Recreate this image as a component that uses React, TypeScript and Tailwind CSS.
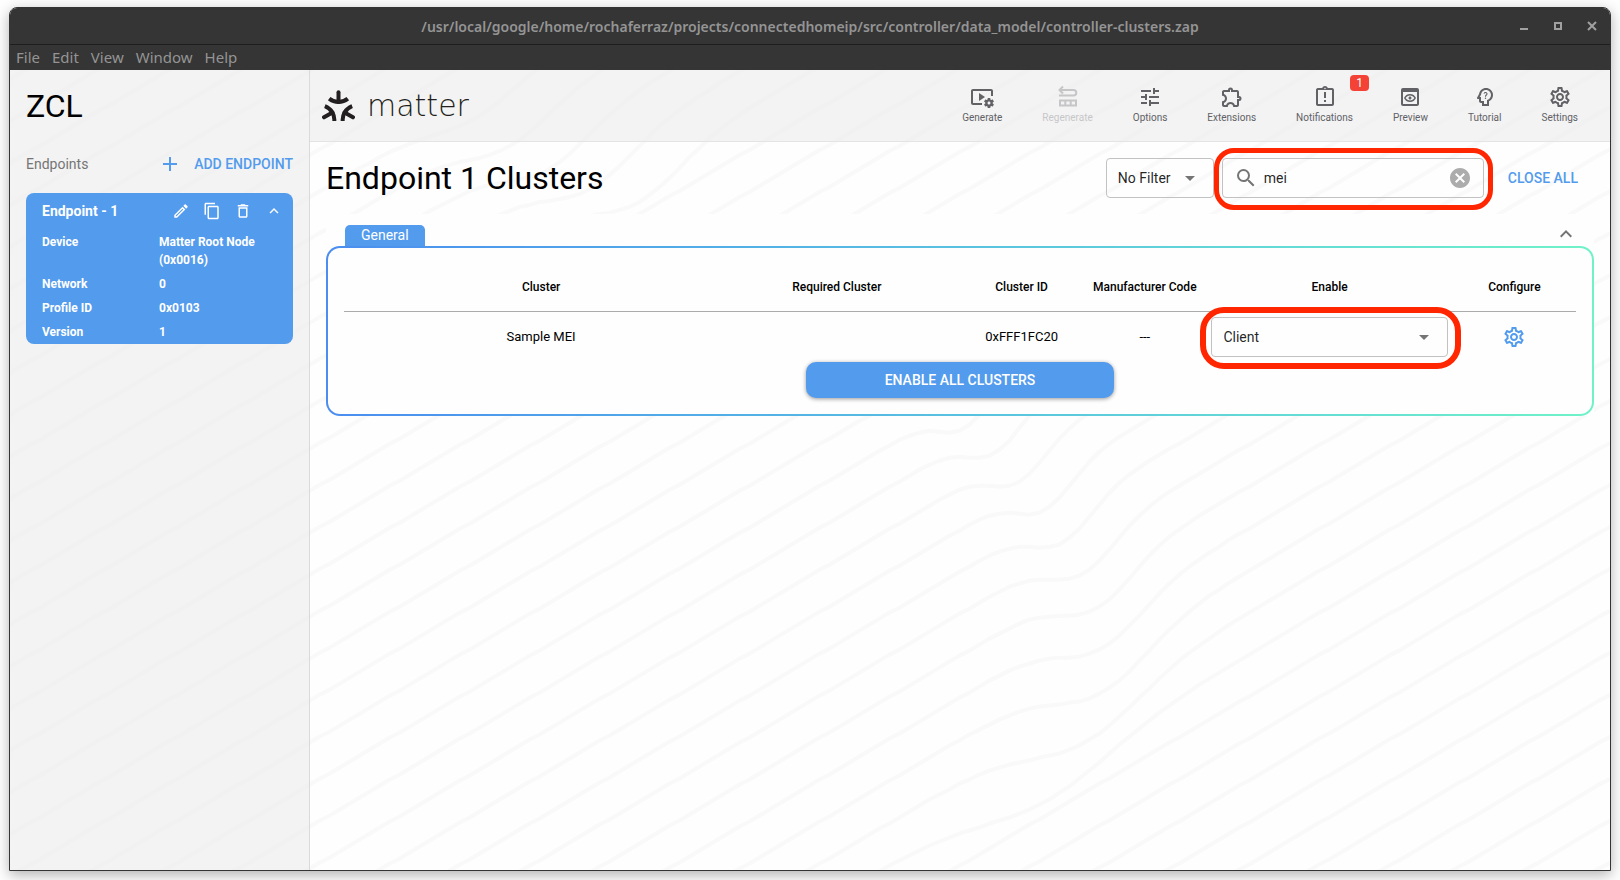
import React from "react";
import {
  MdAdd,
  MdArrowDropDown,
  MdCancel,
  MdContentCopy,
  MdDeleteOutline,
  MdKeyboardArrowUp,
  MdOutlineAssignmentLate,
  MdOutlineEdit,
  MdOutlineExtension,
  MdOutlinePreview,
  MdOutlinePsychologyAlt,
  MdOutlineSettings,
  MdSearch,
  MdTune,
  MdVideoSettings,
} from "react-icons/md";

interface ToolbarItem {
  label: string;
  icon: React.ReactNode;
  disabled?: boolean;
  badge?: number;
}

const RegenerateIcon = () => (
  <svg viewBox="0 0 24 24" className="h-6 w-6" fill="none" stroke="currentColor" strokeWidth="2">
    <path d="M7 1.500 3.500 5 7 8.500M4 5h13.500a2.700 2.700 0 0 1 0 5.500H3" />
    <path d="M4 15.500h16v5H4zM9.300 15.500v5M14.700 15.500v5" />
  </svg>
);

const toolbar: ToolbarItem[] = [
  { label: "Generate", icon: <MdVideoSettings className="h-6 w-6" /> },
  { label: "Regenerate", icon: <RegenerateIcon />, disabled: true },
  { label: "Options", icon: <MdTune className="h-6 w-6" /> },
  { label: "Extensions", icon: <MdOutlineExtension className="h-6 w-6" /> },
  { label: "Notifications", icon: <MdOutlineAssignmentLate className="h-6 w-6" />, badge: 1 },
  { label: "Preview", icon: <MdOutlinePreview className="h-6 w-6" /> },
  { label: "Tutorial", icon: <MdOutlinePsychologyAlt className="h-6 w-6" /> },
  { label: "Settings", icon: <MdOutlineSettings className="h-6 w-6" /> },
];

const details = [
  { name: "Device", value: "Matter Root Node (0x0016)" },
  { name: "Network", value: "0" },
  { name: "Profile ID", value: "0x0103" },
  { name: "Version", value: "1" },
];

// Centre, width and depth of the dent in each contour line, by line number
const dents: Record<number, [number, number, number]> = {
  9: [475, 40, 18],
  10: [510, 40, 24],
  11: [550, 40, 28],
  12: [592, 42, 30],
  13: [640, 42, 30],
  22: [935, 24, 26],
  23: [965, 24, 27],
  24: [995, 25, 28],
  25: [1020, 26, 29],
  26: [1046, 27, 30],
  27: [1064, 29, 31],
  28: [1084, 32, 32],
  29: [1098, 35, 33],
  30: [1104, 40, 34],
  31: [1104, 46, 36],
  32: [1088, 54, 34],
  33: [1050, 62, 28],
};

const contour = (n: number) => {
  const points: string[] = [];
  for (let x = 0; x <= 1640; x += 10) {
    const [centre, width, depth] = dents[n] ?? [0, 1, 0];
    const dent = depth * Math.exp(-((x - centre) ** 2) / (2 * width ** 2));
    points.push(`${x},${Math.round(42 * n + 1 - 0.586 * x + dent)}`);
  }
  return points.join(" ");
};

const Waves = () => (
  <svg
    aria-hidden="true"
    viewBox="10 70 1601 801"
    preserveAspectRatio="xMinYMin slice"
    className="pointer-events-none absolute inset-0 h-full w-full"
    fill="none"
    stroke="#f9f9f9"
    strokeWidth="4"
    strokeLinejoin="round"
  >
    {Array.from({ length: 44 }, (_, i) => (
      <polyline key={i} points={contour(i + 1)} />
    ))}
  </svg>
);

const MatterLogo = () => (
  <div className="flex items-center gap-3 text-[#231f20]">
    <svg
      aria-hidden="true"
      viewBox="0 0 33 31"
      className="h-[31px] w-[33px]"
      fill="none"
      stroke="currentColor"
      strokeWidth="4"
    >
      <g id="arm">
        <path d="M16.500 2.300V12" strokeLinecap="round" />
        <path d="M7.200 8.600c5.500 4.500 13.100 4.500 18.600 0" />
      </g>
      <use href="#arm" transform="rotate(120 16.500 19)" />
      <use href="#arm" transform="rotate(240 16.500 19)" />
    </svg>
    <span className="font-['DejaVu_Sans',sans-serif] text-[30px] leading-8 font-extralight">
      matter
    </span>
  </div>
);

const TitleBar = () => (
  <div className="bg-[#353535] font-['Noto_Sans',sans-serif] text-[15px] text-[#949494]">
    <div className="relative flex h-[37px] items-center justify-center border-b border-[#1e1e1e]">
      <p className="pt-px text-sm font-semibold">
        /usr/local/google/home/rochaferraz/projects/connectedhomeip/src/controller/data_model/controller-clusters.zap
      </p>
      <div className="absolute right-3 flex gap-[22px]">
        <button aria-label="Minimize" className="flex h-3 w-3 items-end p-[2px]">
          <span className="h-[2px] w-2 bg-[#a0a0a0]" />
        </button>
        <button aria-label="Maximize" className="flex h-3 w-3 p-[2px]">
          <span className="h-2 w-2 border-2 border-[#a0a0a0]" />
        </button>
        <button aria-label="Close" className="h-3 w-3">
          <svg viewBox="0 0 12 12" className="h-3 w-3" stroke="#a0a0a0" strokeWidth="2">
            <path d="m2 2 8 8M10 2l-8 8" />
          </svg>
        </button>
      </div>
    </div>
    <nav className="flex h-[25px] items-center gap-3 px-[6px]">
      <button>File</button>
      <button>Edit</button>
      <button>View</button>
      <button>Window</button>
      <button>Help</button>
    </nav>
  </div>
);

const Sidebar = () => (
  <aside className="relative w-[300px] shrink-0 border-r border-[#dadada] bg-[#ebebeb]/60 px-4">
    <h1 className="pt-4 text-[32px] leading-10">ZCL</h1>
    <div className="flex items-center justify-between pt-[26px] text-sm">
      <span className="text-[#757575]">Endpoints</span>
      <button className="flex items-center gap-3 font-medium text-[#539bed]">
        <MdAdd className="h-6 w-6" />
        ADD ENDPOINT
      </button>
    </div>
    <section className="mt-[17px] rounded-lg bg-[#539bed] text-white">
      <div className="flex h-9 items-center justify-between pr-[10px] pl-4">
        <h2 className="text-sm font-bold">Endpoint - 1</h2>
        <div className="flex items-center gap-[13px]">
          <button aria-label="Edit endpoint">
            <MdOutlineEdit className="h-[18px] w-[18px]" />
          </button>
          <button aria-label="Copy endpoint">
            <MdContentCopy className="h-[18px] w-[18px]" />
          </button>
          <button aria-label="Delete endpoint">
            <MdDeleteOutline className="h-[18px] w-[18px]" />
          </button>
          <button aria-label="Collapse endpoint">
            <MdKeyboardArrowUp className="h-[18px] w-[18px]" />
          </button>
        </div>
      </div>
      <dl className="pt-px text-xs leading-[18px] font-bold">
        {details.map(({ name, value }) => (
          <div key={name} className="flex px-4 py-[3px]">
            <dt className="w-[117px] shrink-0">{name}</dt>
            <dd>{value}</dd>
          </div>
        ))}
      </dl>
    </section>
  </aside>
);

const Header = () => (
  <header className="flex h-[72px] items-center justify-between border-b border-[#e4e4e4] bg-[#ebebeb]/60 px-3">
    <MatterLogo />
    <div className="flex">
      {toolbar.map(({ label, icon, disabled, badge }) => (
        <button
          key={label}
          disabled={disabled}
          className="relative flex flex-col items-center px-5 text-[10px] leading-[18px] text-[#616166] disabled:opacity-30"
        >
          {icon}
          <span>{label}</span>
          {badge && (
            <span className="absolute -top-[10px] right-1 rounded bg-[#f44336] px-[6px] text-xs leading-4 text-white">
              {badge}
            </span>
          )}
        </button>
      ))}
    </div>
  </header>
);

const Toolbar = () => (
  <div className="flex items-center justify-between">
    <h2 className="text-[32px] leading-10">Endpoint 1 Clusters</h2>
    <div className="flex items-center text-sm">
      <div className="relative">
        <select
          aria-label="Filter"
          className="h-10 w-[108px] appearance-none rounded border border-[#c2c2c2] pl-[11px] text-black/87"
        >
          <option>No Filter</option>
        </select>
        <MdArrowDropDown className="pointer-events-none absolute top-2 right-3 h-6 w-6 text-[#757575]" />
      </div>
      <div className="relative ml-2 flex h-10 w-[262px] items-center rounded border border-[#c2c2c2] px-[11px]">
        <MdSearch className="h-6 w-6 text-[#757575]" />
        <input
          type="text"
          aria-label="Search clusters"
          defaultValue="mei"
          className="ml-[6px] min-w-0 flex-1 bg-transparent text-black/87 outline-none"
        />
        <button aria-label="Clear search">
          <MdCancel className="h-6 w-6 text-[#acacac]" />
        </button>
        <div className="pointer-events-none absolute -top-[11px] -right-[10px] -bottom-[13px] -left-[9px] rounded-[20px] border-[5px] border-[#ff2600]" />
      </div>
      <button className="pr-4 pl-6 font-medium text-[#539bed]">CLOSE ALL</button>
    </div>
  </div>
);

const ClusterTable = () => (
  <section className="mt-4 bg-[#fefefe]">
    <div className="flex items-end justify-between pt-2 pr-4 pl-[19px]">
      <h3 className="rounded-t-[5px] bg-[#539bed] px-4 text-sm leading-[21px] text-white">
        General
      </h3>
      <button aria-label="Collapse General">
        <MdKeyboardArrowUp className="h-6 w-6 text-[#757575]" />
      </button>
    </div>
    <div className="rounded-[14px] bg-gradient-to-r from-[#4b8df0] to-[#70f2c8] p-[2px]">
      <div className="rounded-xl bg-[#fefefe] px-4 pt-4 pb-4">
        <table className="w-full table-fixed text-[13px]">
          <thead>
            <tr className="h-[47px] border-b border-[#ababab] text-xs">
              <td className="w-[2%]" />
              <th className="w-[28%] font-medium">Cluster</th>
              <th className="w-[20%] font-medium">Required Cluster</th>
              <th className="w-[10%] font-medium">Cluster ID</th>
              <th className="w-[10%] font-medium whitespace-nowrap">Manufacturer Code</th>
              <th className="w-[20%] font-medium">Enable</th>
              <th className="w-[10%] font-medium">Configure</th>
            </tr>
          </thead>
          <tbody>
            <tr className="h-[51px] text-center">
              <td />
              <td>Sample MEI</td>
              <td />
              <td>0xFFF1FC20</td>
              <td>---</td>
              <td className="px-[5px]">
                <div className="relative">
                  <select
                    aria-label="Enable"
                    className="h-10 w-full appearance-none rounded border border-[#c2c2c2] pl-[11px] text-sm text-black/87"
                  >
                    <option>Client</option>
                  </select>
                  <MdArrowDropDown className="pointer-events-none absolute top-2 right-3 h-6 w-6 text-[#757575]" />
                  <div className="pointer-events-none absolute -top-[10px] -right-[13px] -bottom-3 -left-[11px] rounded-[24px] border-[6px] border-[#ff2600]" />
                </div>
              </td>
              <td>
                <button aria-label="Configure Sample MEI" className="align-middle">
                  <MdOutlineSettings className="h-6 w-6 text-[#539bed]" />
                </button>
              </td>
            </tr>
          </tbody>
        </table>
        <button className="mx-auto block h-9 w-1/4 rounded-[10px] bg-[#539bed] text-sm font-medium text-white shadow-[0_1px_4px_rgba(0,0,0,0.4)]">
          ENABLE ALL CLUSTERS
        </button>
      </div>
    </div>
  </section>
);

export default function App() {
  return (
    <div className="flex min-h-screen bg-[#fefefe] px-[9px] pt-[7px] pb-[9px] font-[Roboto,sans-serif] text-black">
      <div className="flex flex-1 flex-col overflow-hidden rounded-t-lg border border-[#353535] shadow-[0_4px_14px_rgba(0,0,0,0.3)]">
        <TitleBar />
        <div className="relative flex flex-1 bg-[#fefefe]">
          <Waves />
          <Sidebar />
          <div className="relative min-w-0 flex-1">
            <Header />
            <main className="px-4 pt-4">
              <Toolbar />
              <ClusterTable />
            </main>
          </div>
        </div>
      </div>
    </div>
  );
}
